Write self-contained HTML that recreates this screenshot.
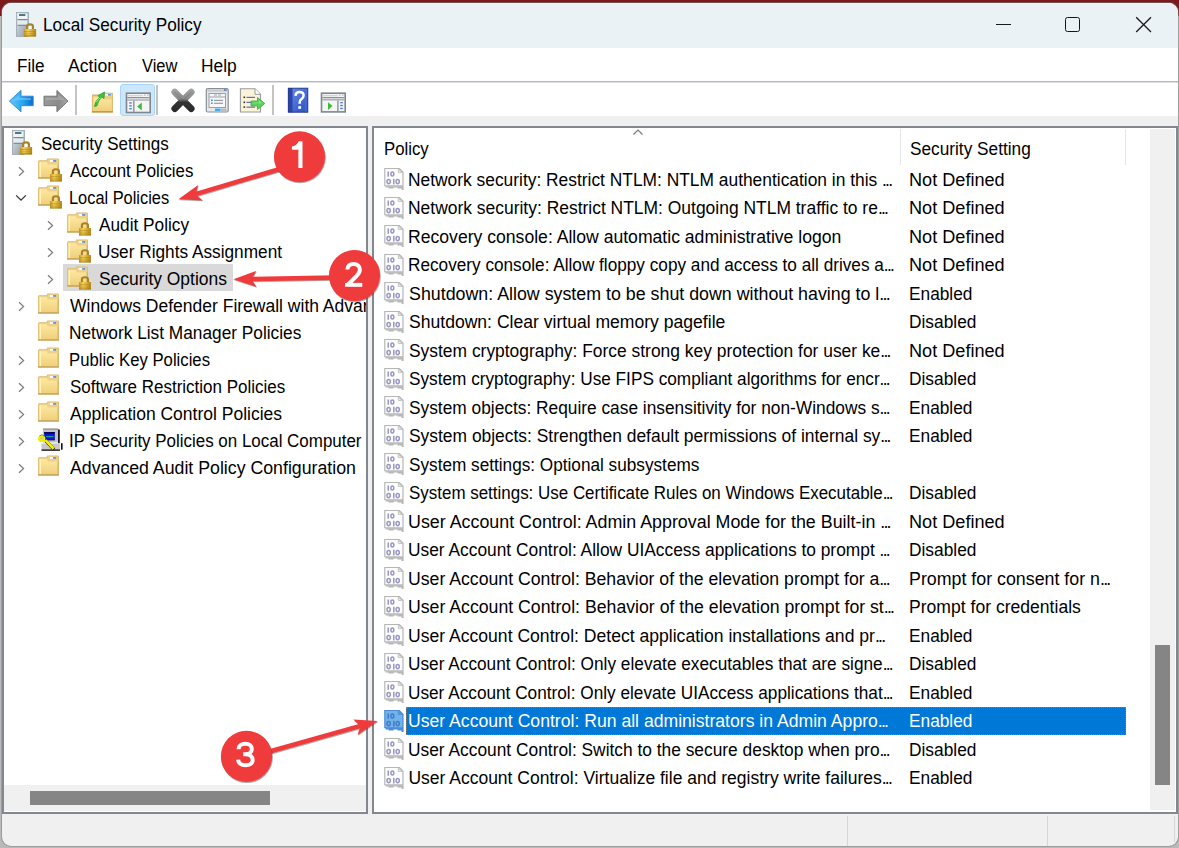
<!DOCTYPE html>
<html><head><meta charset="utf-8"><style>
html,body{margin:0;padding:0;}
body{width:1179px;height:848px;position:relative;overflow:hidden;background:#b9b9b9;font-family:"Liberation Sans", sans-serif;}
.a{position:absolute;}
.t{position:absolute;white-space:nowrap;line-height:normal;transform-origin:0 0;font-family:"Liberation Sans", sans-serif;}
.ic{position:absolute;overflow:visible;}
</style></head><body>
<div class="a" style="left:0;top:0;width:1179px;height:16px;background:#7b1a1c"></div>
<div class="a" id="win" style="left:1px;top:2px;width:1178px;height:845px;box-sizing:border-box;border:1px solid rgba(130,130,130,0.5);border-radius:10px;overflow:hidden;background:#f0f0f0;background-clip:padding-box">
  <div class="a" style="left:0;top:0;width:1176px;height:45px;background:#eaf2f5;border-top:1px solid #f8fcfe;box-sizing:border-box"></div>
  <div class="a" style="left:0;top:45px;width:1176px;height:33px;background:#fff"></div>
  <div class="a" style="left:0;top:78px;width:1176px;height:1px;background:#b9b9b9"></div>
  <div class="a" style="left:0;top:79px;width:1176px;height:1px;background:#dde0e4"></div>
  <div class="a" style="left:0;top:80px;width:1176px;height:33px;background:#fff"></div>
</div>
<!-- title buttons -->
<div class="a" style="left:996px;top:24px;width:15px;height:1px;background:#1a1a1a"></div>
<div class="a" style="left:1065px;top:17px;width:15px;height:15px;box-sizing:border-box;border:1.8px solid #151515;border-radius:2.5px"></div>
<svg class="a" style="left:1135px;top:16px" width="18" height="18" viewBox="0 0 18 18"><path d="M1.2 1.2 L16 16 M16 1.2 L1.2 16" stroke="#1a1a1a" stroke-width="1.3"/></svg>
<!-- toolbar bits -->
<div class="a" style="left:120px;top:84px;width:35px;height:32px;background:#cce6fa;border:1px solid #a6d6ff;border-radius:3px;box-sizing:border-box"></div>
<div class="a" style="left:75px;top:85px;width:2px;height:30px;background:#c4c4c4"></div>
<div class="a" style="left:156px;top:85px;width:2px;height:30px;background:#c4c4c4"></div>
<div class="a" style="left:272px;top:85px;width:2px;height:30px;background:#c4c4c4"></div>
<!-- left pane -->
<div class="a" style="left:2px;top:126px;width:366px;height:688px;box-sizing:border-box;border:2px solid #828790;background:#fff"></div>
<div class="a" style="left:63px;top:264px;width:170px;height:27px;background:#d9d9d9"></div>
<div class="a" style="left:4px;top:785px;width:362px;height:26px;background:#f0f0f0"></div>
<div class="a" style="left:30px;top:791px;width:240px;height:14px;background:#858585"></div>
<!-- right pane -->
<div class="a" style="left:372px;top:126px;width:806px;height:688px;box-sizing:border-box;border:2px solid #828790;background:#fff"></div>
<div class="a" style="left:900px;top:129px;width:1px;height:36px;background:#e5e5e5"></div>
<div class="a" style="left:1125px;top:129px;width:1px;height:36px;background:#e5e5e5"></div>
<svg class="a" style="left:632px;top:128px" width="12" height="8" viewBox="0 0 12 8"><path d="M1.5 6.5 L6 2 L10.5 6.5" fill="none" stroke="#777" stroke-width="1.2"/></svg>
<div class="a" style="left:1150px;top:129px;width:25px;height:681px;background:#f0f0f0"></div>
<div class="a" style="left:1155px;top:645px;width:15px;height:140px;background:#858585"></div>
<div class="a" style="left:406px;top:707px;width:720px;height:28px;box-sizing:border-box;background:#0078d7;border:1px dotted #7a7a7a"></div>
<!-- status bar -->
<div class="a" style="left:847px;top:816px;width:1px;height:30px;background:#d6d6d6"></div>
<div class="a" style="left:1047px;top:816px;width:1px;height:30px;background:#d6d6d6"></div>
<div class="a" style="left:1174px;top:816px;width:1px;height:26px;background:#d6d6d6"></div>
<svg width="0" height="0" style="position:absolute"><defs><linearGradient id="gSrv" x1="0" y1="0" x2="1" y2="1"><stop offset="0" stop-color="#e4eaee"/><stop offset="1" stop-color="#8a96a0"/></linearGradient>
<linearGradient id="gLock" x1="0" y1="0" x2="1" y2="0"><stop offset="0" stop-color="#c89a2a"/><stop offset="0.35" stop-color="#f2d25a"/><stop offset="1" stop-color="#b48410"/></linearGradient>
<linearGradient id="gFront" x1="0" y1="0" x2="0" y2="1"><stop offset="0" stop-color="#fde9a0"/><stop offset="1" stop-color="#f0cf7c"/></linearGradient>
<linearGradient id="gBlue" x1="0" y1="0" x2="1" y2="0"><stop offset="0" stop-color="#5cc8fa"/><stop offset="0.55" stop-color="#2aa6ee"/><stop offset="1" stop-color="#0a6cd0"/></linearGradient>
<linearGradient id="gGray" x1="0" y1="0" x2="1" y2="0"><stop offset="0" stop-color="#9a9a9a"/><stop offset="0.6" stop-color="#8a8a8a"/><stop offset="1" stop-color="#a8a8a8"/></linearGradient>
<linearGradient id="gX" gradientUnits="userSpaceOnUse" x1="0" y1="2" x2="0" y2="24"><stop offset="0" stop-color="#a0a0a0"/><stop offset="0.4" stop-color="#8a8a8a"/><stop offset="0.55" stop-color="#333"/><stop offset="1" stop-color="#2a2a2a"/></linearGradient>
<linearGradient id="gHelp" x1="0" y1="0" x2="1" y2="1"><stop offset="0" stop-color="#6a8ee8"/><stop offset="1" stop-color="#2a4fc0"/></linearGradient>

<g id="lock">
  <path d="M15.9 16.5 V13.2 Q15.9 11.3 18.95 11.3 Q22 11.3 22 13.2 V16.5" fill="none" stroke="#a98226" stroke-width="2.1"/>
  <rect x="13" y="16" width="11.9" height="7.4" fill="url(#gLock)"/>
  <rect x="13" y="18.3" width="11.9" height="0.9" fill="#a57a10" opacity="0.55"/>
  <rect x="13" y="20.6" width="11.9" height="0.9" fill="#a57a10" opacity="0.55"/>
  <rect x="13" y="22.6" width="11.9" height="0.8" fill="#9a720c"/>
</g>

<g id="srv">
  <rect x="0.5" y="0.5" width="12" height="24" fill="url(#gSrv)"/>
  <rect x="0.5" y="0.5" width="12" height="24" fill="none" stroke="#9aa5ae" stroke-width="0.8"/>
  <rect x="1.6" y="1.6" width="9.8" height="5.6" fill="#eef5f7"/>
  <rect x="3" y="2.2" width="6.4" height="1.6" fill="#2f5866"/>
  <rect x="1.6" y="7.2" width="9.8" height="1" fill="#66727c"/>
  <rect x="1.6" y="8.4" width="9.8" height="4.4" fill="#e4ecef"/>
  <rect x="1.6" y="12.8" width="9.8" height="1" fill="#76828c"/>
  <rect x="12.2" y="13.4" width="3.6" height="3.6" fill="#fff"/>
  <path d="M11.1 17.2 V14.2 Q11.1 12.3 14 12.3 Q16.9 12.3 16.9 14.2 V17.2" fill="none" stroke="#a98226" stroke-width="2.2"/>
  <rect x="7.9" y="17" width="12.2" height="7.4" fill="url(#gLock)"/>
  <rect x="7.9" y="19.2" width="12.2" height="0.9" fill="#a57a10" opacity="0.55"/>
  <rect x="7.9" y="21.4" width="12.2" height="0.9" fill="#a57a10" opacity="0.55"/>
  <rect x="7.9" y="23.5" width="12.2" height="0.9" fill="#9a720c"/>
</g>

<g id="folder">
  <path d="M1.1 20.6 V3.4 Q1.1 2.3 2.3 2.3 H9.8 V1.4 Q9.8 0.5 10.8 0.5 H21 Q21.9 0.5 21.9 1.4 V20.6 Z" fill="#dcb868"/>
  <path d="M1.8 19.9 V3.6 Q1.8 3 2.4 3 H10.4 V1.8 Q10.4 1.2 11 1.2 H20.7 Q21.2 1.2 21.2 1.8 V19.9 Z" fill="#eed08a"/>
  <rect x="12.8" y="2" width="3.4" height="1.8" fill="#ffffff"/>
  <rect x="16.2" y="2" width="2.9" height="1.8" fill="#5b96e2"/>
  <path d="M2.6 19.2 V4.3 H9.6 L11 6.4 H20.5 V19.2 Z" fill="url(#gFront)"/>
  <rect x="2.6" y="4.3" width="1.4" height="14.9" fill="#fff2b8"/>
  <rect x="1.1" y="19.2" width="20.8" height="1.4" fill="#c6a25a"/>
  <rect x="20.5" y="6.4" width="1.4" height="12.8" fill="#d9b76c"/>
</g>

<g id="flock">
  <use href="#folder"/>
  <use href="#lock"/>
</g>

<g id="ipsec">
  <path d="M6 1.5 H21 L22.5 3 V15.5 H6 Z" fill="#c4c4c4"/>
  <rect x="6" y="1.5" width="15" height="1.4" fill="#9a9a9a"/>
  <path d="M21 2.5 H22.8 V16.2 H21 Z" fill="#1a1a1a"/>
  <rect x="7.2" y="5" width="10.6" height="8" fill="#1010e0"/>
  <rect x="7.2" y="5" width="10.6" height="1.6" fill="#00004a"/>
  <rect x="9" y="9" width="7.5" height="1.2" fill="#1a9a9a"/>
  <rect x="7.2" y="12.2" width="10.6" height="1.2" fill="#222"/>
  <path d="M4.5 16.5 H22 L23 17.5 V22.6 H4.5 Z" fill="#c8c8c8"/>
  <rect x="24" y="16.2" width="1.6" height="6.5" fill="#111"/>
  <rect x="4.5" y="22.4" width="18.5" height="1.4" fill="#111"/>
  <path d="M9 14 L17 22.5" stroke="#111" stroke-width="3.2"/>
  <path d="M8.5 13.2 L16.6 21.8" stroke="#f4f400" stroke-width="2.6"/>
  <path d="M1 11.5 Q1 8.6 4.6 8.6 Q8.4 8.6 8.4 11.8 Q8.4 15 4.8 15.2 Q1 15.2 1 11.5 Z" fill="#f0f000"/>
  <rect x="3.3" y="10.4" width="2.6" height="2" fill="#c8c890"/>
  <path d="M2.5 8.8 L5 7.8 L7 9" stroke="#8a8a00" stroke-width="1" fill="none"/>
</g>

<g id="doc">
  <path d="M1.2 0.9 H16.6 L20.6 4.9 V23 H18.6 V21.4 H14.6 V20.4 H10.6 V21.4 H5.6 V20.4 H2.6 V19.2 H1.2 Z" fill="#b6b6b6"/>
  <path d="M2.4 2.1 H15.8 L19.4 5.7 V18.2 H2.4 Z" fill="#fdfdfd"/>
  <path d="M2.6 18.2 H19.4 V19.4 H2.6 Z" fill="#c9c9c9"/>
  <path d="M15.3 2.3 V5.4 H19.2 Z" fill="#f4f4f4" stroke="#bdbdbd" stroke-width="0.9"/>
  <g fill="none" stroke="#9996c4" stroke-width="1.5">
    <path d="M5.25 4.4 V9.7"/>
    <ellipse cx="9.35" cy="7.05" rx="1.45" ry="1.95"/>
    <ellipse cx="5.65" cy="14.6" rx="1.65" ry="2.05"/>
    <path d="M10.8 11.8 V17.4"/>
    <ellipse cx="14.7" cy="14.6" rx="1.6" ry="2.05"/>
  </g>
</g>

<g id="docsel">
  <path d="M1.2 0.9 H16.6 L20.6 4.9 V23 H18.6 V21.4 H14.6 V20.4 H10.6 V21.4 H5.6 V20.4 H2.6 V19.2 H1.2 Z" fill="#4a8ed6"/>
  <path d="M2.4 2.1 H15.8 L19.4 5.7 V18.2 H2.4 Z" fill="#74b0ea"/>
  <path d="M15.3 2.3 V5.4 H19.2 Z" fill="#5c9ee0" stroke="#4a8ed6" stroke-width="0.9"/>
  <g fill="none" stroke="#3e7cc8" stroke-width="1.5">
    <path d="M5.25 4.4 V9.7"/>
    <ellipse cx="9.35" cy="7.05" rx="1.45" ry="1.95"/>
    <ellipse cx="5.65" cy="14.6" rx="1.65" ry="2.05"/>
    <path d="M10.8 11.8 V17.4"/>
    <ellipse cx="14.7" cy="14.6" rx="1.6" ry="2.05"/>
  </g>
</g>

<g id="chev"><path d="M2 1.2 L6.6 5.5 L2 9.8" fill="none" stroke="#7b7b7b" stroke-width="1.2"/></g>
<g id="chevd"><path d="M1.2 1.4 L6 6.2 L10.8 1.4" fill="none" stroke="#333" stroke-width="1.3"/></g>

<g id="back">
  <path d="M1.4 12.1 L13 1.4 V7.2 H25.2 V16.7 H13 V22.8 Z" fill="url(#gBlue)" stroke="#2f86d6" stroke-width="0.9" stroke-linejoin="round"/>
  <path d="M4.5 12.1 L11.5 5.5 V9 H23 V11 H11.5 Z" fill="#8ad8ff" opacity="0.45"/>
</g>
<g id="fwd">
  <path d="M1 7.2 H13.9 V1.4 L25 12.1 L13.9 22.8 V16.7 H1 Z" fill="url(#gGray)" stroke="#6e6e6e" stroke-width="0.9" stroke-linejoin="round"/>
  <path d="M2.5 8.8 H15 V5 L21.5 11 H2.5 Z" fill="#c8c8c8" opacity="0.35"/>
</g>

<g id="upfolder">
  <path d="M1.9 23.5 V6.5 Q1.9 5.5 3 5.5 H12 V4.6 Q12 3.8 12.8 3.8 H22 Q22.9 3.8 22.9 4.6 V23.5 Z" fill="#d4b060"/>
  <path d="M2.6 22.8 V6.8 H12.6 V4.5 H22.2 V22.8 Z" fill="#ecd08a"/>
  <rect x="15" y="5" width="3" height="1.5" fill="#fff"/>
  <rect x="18" y="5" width="2.8" height="1.5" fill="#5b96e2"/>
  <path d="M3.5 22 V8.5 H11.5 L13 10.5 H21.5 V22 Z" fill="url(#gFront)"/>
  <rect x="1.9" y="22" width="21" height="1.5" fill="#c09a50"/>
  <path d="M4.5 17.5 Q5.5 11 9.5 8.5 L8 6.5 L14.5 3 L14 9.5 L12 8 Q8.5 11 6.8 17 Z" fill="#3ec23e" stroke="#2a962a" stroke-width="0.7" stroke-linejoin="round"/>
  <path d="M6.5 13 Q8 10 10.5 8.8" fill="none" stroke="#8ef08e" stroke-width="1"/>
</g>

<g id="showtree">
  <rect x="1.5" y="1.2" width="23.7" height="19.3" fill="#f4f4f4"/>
  <rect x="1.5" y="1.2" width="23.7" height="19.3" fill="none" stroke="#7e8690" stroke-width="1.6"/>
  <rect x="2.3" y="3.2" width="15.5" height="1" fill="#c8ccd2"/>
  <rect x="19" y="2.4" width="1.6" height="1.6" fill="#c8ccd2"/>
  <rect x="22" y="2.4" width="1.6" height="1.6" fill="#c8ccd2"/>
  <rect x="2.3" y="5" width="22.1" height="1.3" fill="#8a929c"/>
  <rect x="2.3" y="7.4" width="22.1" height="1.2" fill="#9aa2ac"/>
  <rect x="8.1" y="8.6" width="1.4" height="11.2" fill="#8a929c"/>
  <rect x="4.2" y="10.3" width="2.6" height="1.3" fill="#4a7ed8"/>
  <rect x="4.2" y="13.2" width="2.6" height="1.3" fill="#4a7ed8"/>
  <rect x="4.2" y="16.1" width="2.6" height="1.3" fill="#4a7ed8"/>
  <path d="M16.8 10.5 V18.5 L12.2 14.5 Z" fill="#3cbc3c"/>
</g>

<g id="actpane">
  <rect x="1.5" y="1.2" width="23.7" height="18.7" fill="#f4f4f4"/>
  <rect x="1.5" y="1.2" width="23.7" height="18.7" fill="none" stroke="#7e8690" stroke-width="1.6"/>
  <rect x="2.3" y="3.2" width="15.5" height="1" fill="#c8ccd2"/>
  <rect x="19" y="2.4" width="1.6" height="1.6" fill="#c8ccd2"/>
  <rect x="22" y="2.4" width="1.6" height="1.6" fill="#c8ccd2"/>
  <rect x="2.3" y="5" width="22.1" height="1.3" fill="#8a929c"/>
  <rect x="2.3" y="7.2" width="22.1" height="1.2" fill="#9aa2ac"/>
  <rect x="17.2" y="8.4" width="1.4" height="11" fill="#8a929c"/>
  <rect x="20.2" y="10" width="2.6" height="1.3" fill="#4a7ed8"/>
  <rect x="20.2" y="12.9" width="2.6" height="1.3" fill="#4a7ed8"/>
  <rect x="20.2" y="15.8" width="2.6" height="1.3" fill="#4a7ed8"/>
  <path d="M8 10.3 V18 L12.5 14.1 Z" fill="#3cbc3c"/>
</g>

<g id="del">
  <path d="M4.8 4.2 L21.2 20.6 M21.2 4.2 L4.8 20.6" stroke="url(#gX)" stroke-width="6.8" stroke-linecap="round"/>
  <path d="M4.8 4.2 L21.2 20.6 M21.2 4.2 L4.8 20.6" stroke="#3a3a3a" stroke-width="0.8" stroke-linecap="round" opacity="0.3"/>
</g>

<g id="props">
  <rect x="1.3" y="0.6" width="21.9" height="23.4" rx="1.5" fill="#e6e8ea" stroke="#8a9098" stroke-width="1.2"/>
  <rect x="2.5" y="1.8" width="19.5" height="2" fill="#c9ced4"/>
  <rect x="19" y="1" width="2.6" height="2" fill="#6a90c8"/>
  <rect x="4" y="5.5" width="16.5" height="14" fill="#f6f7f8" stroke="#9aa0a8" stroke-width="1"/>
  <rect x="9" y="6" width="3" height="2.2" fill="#ccd0d6"/>
  <rect x="13" y="6" width="3" height="2.2" fill="#ccd0d6"/>
  <rect x="4.2" y="8.5" width="16" height="1" fill="#9aa0a8"/>
  <rect x="6" y="11.5" width="1.8" height="1.6" fill="#2a9af0"/>
  <rect x="9" y="11.8" width="9" height="1.1" fill="#8c9298"/>
  <rect x="6" y="14.5" width="1.6" height="1.4" fill="#777"/>
  <rect x="9" y="14.7" width="9" height="1.1" fill="#8c9298"/>
  <rect x="10" y="20.5" width="5.5" height="2.6" fill="#3ab0f0"/>
  <rect x="16" y="20.5" width="5.5" height="2.6" fill="#b8bcc0"/>
</g>

<g id="export">
  <path d="M1.4 0.8 H16 L21.5 6.3 V24 H1.4 Z" fill="#fbf3d8" stroke="#9a9a9a" stroke-width="1.1"/>
  <path d="M16 0.8 V6.3 H21.5" fill="#fff" stroke="#9a9a9a" stroke-width="1"/>
  <rect x="4.5" y="8.5" width="1.6" height="1.6" fill="#333"/>
  <rect x="7.5" y="8.8" width="8.5" height="1.1" fill="#5a5ac0"/>
  <rect x="4.5" y="13.5" width="1.6" height="1.6" fill="#333"/>
  <rect x="7.5" y="13.8" width="8.5" height="1.1" fill="#5a5ac0"/>
  <rect x="4.5" y="18.3" width="1.6" height="1.6" fill="#333"/>
  <rect x="7.5" y="18.6" width="8.5" height="1.1" fill="#5a5ac0"/>
  <path d="M12 13 H18.5 V9.5 L25.8 15.5 L18.5 21.5 V18 H12 Z" fill="#5ad25a" stroke="#3aa83a" stroke-width="0.8"/>
  <path d="M13.5 14.5 H20 V12.5 L23.5 15.3 H13.5 Z" fill="#aef0ae" opacity="0.6"/>
</g>

<g id="help">
  <rect x="1.3" y="1.2" width="19.5" height="24" fill="url(#gHelp)"/>
  <rect x="1.3" y="1.2" width="4.2" height="24" fill="#2a44a8"/>
  <rect x="1.3" y="1.2" width="19.5" height="24" fill="none" stroke="#20308a" stroke-width="0.9"/>
  <rect x="17.5" y="2" width="2.6" height="22.5" fill="#4a6ad8" opacity="0.6"/>
  <path d="M8.5 8.8 Q8.8 5 12.6 5 Q16.6 5 16.6 8.6 Q16.6 11 14.2 12.4 Q12.7 13.3 12.7 15.8 V16.8" fill="none" stroke="#ffffff" stroke-width="2.5"/>
  <rect x="11.3" y="19.2" width="2.8" height="2.6" fill="#fff"/>
</g>
</defs></svg>
<svg class="ic" style="left:16px;top:12px" width="22" height="25" viewBox="0 0 22 25"><use href="#srv"/></svg><svg class="ic" style="left:12px;top:130px" width="22" height="25" viewBox="0 0 22 25"><use href="#srv"/></svg><svg class="ic" style="left:17px;top:166px" width="9" height="11" viewBox="0 0 9 11"><use href="#chev"/></svg><svg class="ic" style="left:37px;top:158px" width="26" height="24" viewBox="0 0 26 24"><use href="#flock"/></svg><svg class="ic" style="left:15px;top:194px" width="12" height="8" viewBox="0 0 12 8"><use href="#chevd"/></svg><svg class="ic" style="left:37px;top:185px" width="26" height="24" viewBox="0 0 26 24"><use href="#flock"/></svg><svg class="ic" style="left:46px;top:220px" width="9" height="11" viewBox="0 0 9 11"><use href="#chev"/></svg><svg class="ic" style="left:66px;top:212px" width="26" height="24" viewBox="0 0 26 24"><use href="#flock"/></svg><svg class="ic" style="left:46px;top:247px" width="9" height="11" viewBox="0 0 9 11"><use href="#chev"/></svg><svg class="ic" style="left:66px;top:239px" width="26" height="24" viewBox="0 0 26 24"><use href="#flock"/></svg><svg class="ic" style="left:46px;top:274px" width="9" height="11" viewBox="0 0 9 11"><use href="#chev"/></svg><svg class="ic" style="left:66px;top:266px" width="26" height="24" viewBox="0 0 26 24"><use href="#flock"/></svg><svg class="ic" style="left:17px;top:301px" width="9" height="11" viewBox="0 0 9 11"><use href="#chev"/></svg><svg class="ic" style="left:37px;top:293px" width="26" height="24" viewBox="0 0 26 24"><use href="#folder"/></svg><svg class="ic" style="left:37px;top:320px" width="26" height="24" viewBox="0 0 26 24"><use href="#folder"/></svg><svg class="ic" style="left:17px;top:355px" width="9" height="11" viewBox="0 0 9 11"><use href="#chev"/></svg><svg class="ic" style="left:37px;top:347px" width="26" height="24" viewBox="0 0 26 24"><use href="#folder"/></svg><svg class="ic" style="left:17px;top:382px" width="9" height="11" viewBox="0 0 9 11"><use href="#chev"/></svg><svg class="ic" style="left:37px;top:374px" width="26" height="24" viewBox="0 0 26 24"><use href="#folder"/></svg><svg class="ic" style="left:17px;top:409px" width="9" height="11" viewBox="0 0 9 11"><use href="#chev"/></svg><svg class="ic" style="left:37px;top:401px" width="26" height="24" viewBox="0 0 26 24"><use href="#folder"/></svg><svg class="ic" style="left:17px;top:436px" width="9" height="11" viewBox="0 0 9 11"><use href="#chev"/></svg><svg class="ic" style="left:37px;top:427px" width="26" height="26" viewBox="0 0 26 26"><use href="#ipsec"/></svg><svg class="ic" style="left:17px;top:463px" width="9" height="11" viewBox="0 0 9 11"><use href="#chev"/></svg><svg class="ic" style="left:37px;top:455px" width="26" height="24" viewBox="0 0 26 24"><use href="#folder"/></svg><svg class="ic" style="left:383px;top:167px" width="22" height="25" viewBox="0 0 22 25"><use href="#doc"/></svg><svg class="ic" style="left:383px;top:196px" width="22" height="25" viewBox="0 0 22 25"><use href="#doc"/></svg><svg class="ic" style="left:383px;top:224px" width="22" height="25" viewBox="0 0 22 25"><use href="#doc"/></svg><svg class="ic" style="left:383px;top:253px" width="22" height="25" viewBox="0 0 22 25"><use href="#doc"/></svg><svg class="ic" style="left:383px;top:281px" width="22" height="25" viewBox="0 0 22 25"><use href="#doc"/></svg><svg class="ic" style="left:383px;top:310px" width="22" height="25" viewBox="0 0 22 25"><use href="#doc"/></svg><svg class="ic" style="left:383px;top:338px" width="22" height="25" viewBox="0 0 22 25"><use href="#doc"/></svg><svg class="ic" style="left:383px;top:367px" width="22" height="25" viewBox="0 0 22 25"><use href="#doc"/></svg><svg class="ic" style="left:383px;top:395px" width="22" height="25" viewBox="0 0 22 25"><use href="#doc"/></svg><svg class="ic" style="left:383px;top:424px" width="22" height="25" viewBox="0 0 22 25"><use href="#doc"/></svg><svg class="ic" style="left:383px;top:452px" width="22" height="25" viewBox="0 0 22 25"><use href="#doc"/></svg><svg class="ic" style="left:383px;top:481px" width="22" height="25" viewBox="0 0 22 25"><use href="#doc"/></svg><svg class="ic" style="left:383px;top:509px" width="22" height="25" viewBox="0 0 22 25"><use href="#doc"/></svg><svg class="ic" style="left:383px;top:538px" width="22" height="25" viewBox="0 0 22 25"><use href="#doc"/></svg><svg class="ic" style="left:383px;top:566px" width="22" height="25" viewBox="0 0 22 25"><use href="#doc"/></svg><svg class="ic" style="left:383px;top:595px" width="22" height="25" viewBox="0 0 22 25"><use href="#doc"/></svg><svg class="ic" style="left:383px;top:623px" width="22" height="25" viewBox="0 0 22 25"><use href="#doc"/></svg><svg class="ic" style="left:383px;top:652px" width="22" height="25" viewBox="0 0 22 25"><use href="#doc"/></svg><svg class="ic" style="left:383px;top:680px" width="22" height="25" viewBox="0 0 22 25"><use href="#doc"/></svg><svg class="ic" style="left:383px;top:709px" width="22" height="25" viewBox="0 0 22 25"><use href="#docsel"/></svg><svg class="ic" style="left:383px;top:737px" width="22" height="25" viewBox="0 0 22 25"><use href="#doc"/></svg><svg class="ic" style="left:383px;top:766px" width="22" height="25" viewBox="0 0 22 25"><use href="#doc"/></svg><svg class="ic" style="left:8px;top:89px" width="27" height="24" viewBox="0 0 27 24"><use href="#back"/></svg><svg class="ic" style="left:43px;top:89px" width="27" height="24" viewBox="0 0 27 24"><use href="#fwd"/></svg><svg class="ic" style="left:90px;top:89px" width="25" height="25" viewBox="0 0 25 25"><use href="#upfolder"/></svg><svg class="ic" style="left:125px;top:92px" width="27" height="22" viewBox="0 0 27 22"><use href="#showtree"/></svg><svg class="ic" style="left:170px;top:88px" width="27" height="26" viewBox="0 0 27 26"><use href="#del"/></svg><svg class="ic" style="left:205px;top:88px" width="25" height="26" viewBox="0 0 25 26"><use href="#props"/></svg><svg class="ic" style="left:239px;top:88px" width="28" height="26" viewBox="0 0 28 26"><use href="#export"/></svg><svg class="ic" style="left:287px;top:87px" width="22" height="27" viewBox="0 0 22 27"><use href="#help"/></svg><svg class="ic" style="left:320px;top:92px" width="27" height="22" viewBox="0 0 27 22"><use href="#actpane"/></svg>
<div class="t" style="left:42.92px;top:15.16px;font-size:17.5px;color:#000;transform:scaleX(0.9818);">Local Security Policy</div>
<div class="t" style="left:16.72px;top:55.66px;font-size:17.5px;color:#000;transform:scaleX(0.9784);">File</div>
<div class="t" style="left:68.00px;top:55.66px;font-size:17.5px;color:#000;transform:scaleX(1.0082);">Action</div>
<div class="t" style="left:142.30px;top:55.66px;font-size:17.5px;color:#000;transform:scaleX(0.9398);">View</div>
<div class="t" style="left:201.41px;top:55.66px;font-size:17.5px;color:#000;transform:scaleX(0.9922);">Help</div>
<div class="t" style="left:41.40px;top:134.16px;font-size:17.5px;color:#000;transform:scaleX(0.9729);width:333.63px;overflow:hidden;">Security Settings</div>
<div class="t" style="left:70.00px;top:161.16px;font-size:17.5px;color:#000;transform:scaleX(0.9607);width:308.11px;overflow:hidden;">Account Policies</div>
<div class="t" style="left:69.06px;top:188.16px;font-size:17.5px;color:#000;transform:scaleX(0.9355);width:317.40px;overflow:hidden;">Local Policies</div>
<div class="t" style="left:98.50px;top:215.16px;font-size:17.5px;color:#000;transform:scaleX(0.9849);width:271.61px;overflow:hidden;">Audit Policy</div>
<div class="t" style="left:97.51px;top:242.16px;font-size:17.5px;color:#000;transform:scaleX(0.9855);width:272.42px;overflow:hidden;">User Rights Assignment</div>
<div class="t" style="left:98.50px;top:269.16px;font-size:17.5px;color:#000;transform:scaleX(0.9958);width:268.63px;overflow:hidden;">Security Options</div>
<div class="t" style="left:70.00px;top:296.16px;font-size:17.5px;color:#000;width:296.00px;overflow:hidden;">Windows Defender Firewall with Advanced Security</div>
<div class="t" style="left:69.01px;top:323.16px;font-size:17.5px;color:#000;transform:scaleX(0.9871);width:300.87px;overflow:hidden;">Network List Manager Policies</div>
<div class="t" style="left:69.05px;top:350.16px;font-size:17.5px;color:#000;transform:scaleX(0.9537);width:311.37px;overflow:hidden;">Public Key Policies</div>
<div class="t" style="left:70.00px;top:377.16px;font-size:17.5px;color:#000;transform:scaleX(0.9707);width:304.93px;overflow:hidden;">Software Restriction Policies</div>
<div class="t" style="left:70.00px;top:404.16px;font-size:17.5px;color:#000;width:296.02px;overflow:hidden;">Application Control Policies</div>
<div class="t" style="left:69.03px;top:431.16px;font-size:17.5px;color:#000;transform:scaleX(0.9679);width:306.80px;overflow:hidden;">IP Security Policies on Local Computer</div>
<div class="t" style="left:70.00px;top:458.16px;font-size:17.5px;color:#000;transform:scaleX(1.0135);width:292.05px;overflow:hidden;">Advanced Audit Policy Configuration</div>
<div class="t" style="left:384.24px;top:138.66px;font-size:17.5px;color:#000;transform:scaleX(0.9556);">Policy</div>
<div class="t" style="left:910.00px;top:138.66px;font-size:17.5px;color:#000;transform:scaleX(0.9850);">Security Setting</div>
<div class="t" style="left:408.41px;top:169.96px;font-size:17.5px;color:#000;transform:scaleX(0.9927);">Network security: Restrict NTLM: NTLM authentication in this <span style="letter-spacing:-1.75px">...</span></div>
<div class="t" style="left:909.26px;top:169.96px;font-size:17.5px;color:#000;transform:scaleX(1.0354);">Not Defined</div>
<div class="t" style="left:408.40px;top:198.46px;font-size:17.5px;color:#000;transform:scaleX(0.9969);">Network security: Restrict NTLM: Outgoing NTLM traffic to re<span style="letter-spacing:-1.75px">...</span></div>
<div class="t" style="left:909.26px;top:198.46px;font-size:17.5px;color:#000;transform:scaleX(1.0354);">Not Defined</div>
<div class="t" style="left:408.39px;top:226.96px;font-size:17.5px;color:#000;transform:scaleX(1.0057);">Recovery console: Allow automatic administrative logon</div>
<div class="t" style="left:909.26px;top:226.96px;font-size:17.5px;color:#000;transform:scaleX(1.0354);">Not Defined</div>
<div class="t" style="left:408.42px;top:255.46px;font-size:17.5px;color:#000;transform:scaleX(0.9823);">Recovery console: Allow floppy copy and access to all drives a<span style="letter-spacing:-1.75px">...</span></div>
<div class="t" style="left:909.26px;top:255.46px;font-size:17.5px;color:#000;transform:scaleX(1.0354);">Not Defined</div>
<div class="t" style="left:409.40px;top:283.96px;font-size:17.5px;color:#000;transform:scaleX(1.0178);">Shutdown: Allow system to be shut down without having to l<span style="letter-spacing:-1.75px">...</span></div>
<div class="t" style="left:909.31px;top:283.96px;font-size:17.5px;color:#000;transform:scaleX(0.9872);">Enabled</div>
<div class="t" style="left:409.40px;top:312.46px;font-size:17.5px;color:#000;transform:scaleX(1.0037);">Shutdown: Clear virtual memory pagefile</div>
<div class="t" style="left:909.31px;top:312.46px;font-size:17.5px;color:#000;transform:scaleX(0.9898);">Disabled</div>
<div class="t" style="left:409.40px;top:340.96px;font-size:17.5px;color:#000;transform:scaleX(0.9950);">System cryptography: Force strong key protection for user ke<span style="letter-spacing:-1.75px">...</span></div>
<div class="t" style="left:909.26px;top:340.96px;font-size:17.5px;color:#000;transform:scaleX(1.0354);">Not Defined</div>
<div class="t" style="left:409.40px;top:369.46px;font-size:17.5px;color:#000;transform:scaleX(0.9835);">System cryptography: Use FIPS compliant algorithms for encr<span style="letter-spacing:-1.75px">...</span></div>
<div class="t" style="left:909.31px;top:369.46px;font-size:17.5px;color:#000;transform:scaleX(0.9898);">Disabled</div>
<div class="t" style="left:409.40px;top:397.96px;font-size:17.5px;color:#000;transform:scaleX(0.9894);">System objects: Require case insensitivity for non-Windows s<span style="letter-spacing:-1.75px">...</span></div>
<div class="t" style="left:909.31px;top:397.96px;font-size:17.5px;color:#000;transform:scaleX(0.9872);">Enabled</div>
<div class="t" style="left:409.40px;top:426.46px;font-size:17.5px;color:#000;transform:scaleX(0.9949);">System objects: Strengthen default permissions of internal sy<span style="letter-spacing:-1.75px">...</span></div>
<div class="t" style="left:909.31px;top:426.46px;font-size:17.5px;color:#000;transform:scaleX(0.9872);">Enabled</div>
<div class="t" style="left:409.40px;top:454.96px;font-size:17.5px;color:#000;transform:scaleX(0.9820);">System settings: Optional subsystems</div>
<div class="t" style="left:409.40px;top:483.46px;font-size:17.5px;color:#000;transform:scaleX(0.9684);">System settings: Use Certificate Rules on Windows Executable<span style="letter-spacing:-1.75px">...</span></div>
<div class="t" style="left:909.31px;top:483.46px;font-size:17.5px;color:#000;transform:scaleX(0.9898);">Disabled</div>
<div class="t" style="left:408.38px;top:511.96px;font-size:17.5px;color:#000;transform:scaleX(1.0200);">User Account Control: Admin Approval Mode for the Built-in <span style="letter-spacing:-1.75px">...</span></div>
<div class="t" style="left:909.26px;top:511.96px;font-size:17.5px;color:#000;transform:scaleX(1.0354);">Not Defined</div>
<div class="t" style="left:408.41px;top:540.46px;font-size:17.5px;color:#000;transform:scaleX(0.9914);">User Account Control: Allow UIAccess applications to prompt <span style="letter-spacing:-1.75px">...</span></div>
<div class="t" style="left:909.31px;top:540.46px;font-size:17.5px;color:#000;transform:scaleX(0.9898);">Disabled</div>
<div class="t" style="left:408.39px;top:568.96px;font-size:17.5px;color:#000;transform:scaleX(1.0095);">User Account Control: Behavior of the elevation prompt for a<span style="letter-spacing:-1.75px">...</span></div>
<div class="t" style="left:909.28px;top:568.96px;font-size:17.5px;color:#000;transform:scaleX(1.0174);">Prompt for consent for n<span style="letter-spacing:-1.75px">...</span></div>
<div class="t" style="left:408.39px;top:597.46px;font-size:17.5px;color:#000;transform:scaleX(1.0106);">User Account Control: Behavior of the elevation prompt for st<span style="letter-spacing:-1.75px">...</span></div>
<div class="t" style="left:909.30px;top:597.46px;font-size:17.5px;color:#000;transform:scaleX(1.0039);">Prompt for credentials</div>
<div class="t" style="left:408.40px;top:625.96px;font-size:17.5px;color:#000;transform:scaleX(1.0042);">User Account Control: Detect application installations and pr<span style="letter-spacing:-1.75px">...</span></div>
<div class="t" style="left:909.31px;top:625.96px;font-size:17.5px;color:#000;transform:scaleX(0.9872);">Enabled</div>
<div class="t" style="left:408.41px;top:654.46px;font-size:17.5px;color:#000;transform:scaleX(0.9858);">User Account Control: Only elevate executables that are signe<span style="letter-spacing:-1.75px">...</span></div>
<div class="t" style="left:909.31px;top:654.46px;font-size:17.5px;color:#000;transform:scaleX(0.9898);">Disabled</div>
<div class="t" style="left:408.42px;top:682.96px;font-size:17.5px;color:#000;transform:scaleX(0.9839);">User Account Control: Only elevate UIAccess applications that<span style="letter-spacing:-1.75px">...</span></div>
<div class="t" style="left:909.31px;top:682.96px;font-size:17.5px;color:#000;transform:scaleX(0.9872);">Enabled</div>
<div class="t" style="left:408.39px;top:711.46px;font-size:17.5px;color:#fff;transform:scaleX(1.0063);">User Account Control: Run all administrators in Admin Appro<span style="letter-spacing:-1.75px">...</span></div>
<div class="t" style="left:909.31px;top:711.46px;font-size:17.5px;color:#fff;transform:scaleX(0.9872);">Enabled</div>
<div class="t" style="left:408.41px;top:739.96px;font-size:17.5px;color:#000;transform:scaleX(0.9913);">User Account Control: Switch to the secure desktop when pro<span style="letter-spacing:-1.75px">...</span></div>
<div class="t" style="left:909.31px;top:739.96px;font-size:17.5px;color:#000;transform:scaleX(0.9898);">Disabled</div>
<div class="t" style="left:408.40px;top:768.46px;font-size:17.5px;color:#000;">User Account Control: Virtualize file and registry write failures<span style="letter-spacing:-1.75px">...</span></div>
<div class="t" style="left:909.31px;top:768.46px;font-size:17.5px;color:#000;transform:scaleX(0.9872);">Enabled</div>
<!-- annotations -->
<svg class="a" style="left:0;top:0" width="1179" height="848" viewBox="0 0 1179 848"><g opacity="0.4" transform="translate(0.6 0.9)"><path d="M285.0 167.5 L194.7 194.4" stroke="#4a2a2a" stroke-width="4.6" fill="none"/><path d="M178.4 199.3 L198.2 185.1 L195.6 194.2 L202.7 200.4 Z" fill="#4a2a2a"/><path d="M335.0 277.6 L250.4 279.0" stroke="#4a2a2a" stroke-width="4.6" fill="none"/><path d="M233.4 279.3 L256.3 270.9 L251.4 279.0 L256.5 286.9 Z" fill="#4a2a2a"/><path d="M265.0 752.8 L361.2 725.6" stroke="#4a2a2a" stroke-width="4.6" fill="none"/><path d="M377.6 721.0 L357.6 734.9 L360.3 725.9 L353.3 719.6 Z" fill="#4a2a2a"/></g><path d="M285.0 167.5 L194.7 194.4" stroke="#ef3b3b" stroke-width="4.6" fill="none"/><path d="M178.4 199.3 L198.2 185.1 L195.6 194.2 L202.7 200.4 Z" fill="#ef3b3b"/><path d="M335.0 277.6 L250.4 279.0" stroke="#ef3b3b" stroke-width="4.6" fill="none"/><path d="M233.4 279.3 L256.3 270.9 L251.4 279.0 L256.5 286.9 Z" fill="#ef3b3b"/><path d="M265.0 752.8 L361.2 725.6" stroke="#ef3b3b" stroke-width="4.6" fill="none"/><path d="M377.6 721.0 L357.6 734.9 L360.3 725.9 L353.3 719.6 Z" fill="#ef3b3b"/><circle cx="300.0" cy="157.5" r="25.8" fill="#4a2a2a" opacity="0.4"/><circle cx="299.5" cy="156.7" r="25.5" fill="#ef3b3b"/><circle cx="355.0" cy="276.40000000000003" r="25.8" fill="#4a2a2a" opacity="0.4"/><circle cx="354.5" cy="275.6" r="25.5" fill="#ef3b3b"/><circle cx="247.0" cy="757.1999999999999" r="25.900000000000002" fill="#4a2a2a" opacity="0.4"/><circle cx="246.5" cy="756.4" r="25.6" fill="#ef3b3b"/><path d="M298.4 168 V149.6 Q295.2 150 291.9 149.6 V146.6 Q296.4 146 298.8 141.3 H302.5 V168 Z" fill="#fff"/><path d="M347.4 269.6 C347.4 265.9 350 263.9 353.5 263.9 C357.2 263.9 359.9 266.2 359.9 269.5 C359.9 272.1 358.5 274 356.4 276.2 L347.6 285" fill="none" stroke="#fff" stroke-width="4"/><rect x="345" y="282.9" width="17.3" height="3.9" fill="#fff"/><path d="M238.6 749.2 C238.6 745.8 241.5 743.75 245.3 743.75 C249.2 743.75 251.8 745.8 251.8 749 C251.8 752.2 249.3 754.2 245.5 754.2 H243.2 M245.5 754.2 C249.9 754.2 252.65 756.6 252.65 759.9 C252.65 763.3 249.8 765.25 245.3 765.25 C241 765.25 238.2 763.2 238.15 759.6" fill="none" stroke="#fff" stroke-width="4"/></svg>
</body></html>
